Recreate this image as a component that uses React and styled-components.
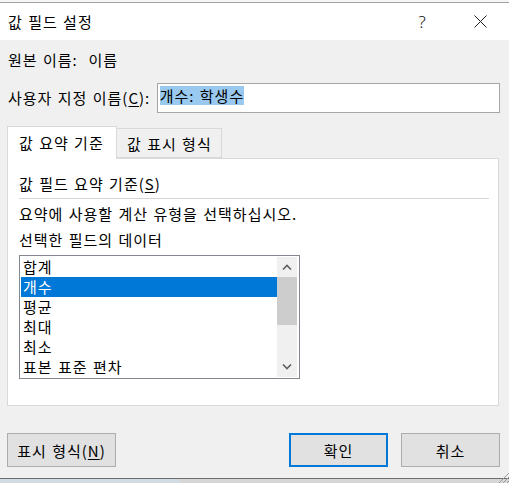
import React from 'react';
import styled, { createGlobalStyle } from 'styled-components';

const GlobalStyle = createGlobalStyle`
    html, body {
        margin: 0;
        padding: 0;
        background: #f0f0f0;
    }
    body {
        font-family: "Noto Sans CJK KR", "Noto Sans", sans-serif;
        font-size: 15px;
        letter-spacing: 1px;
        word-spacing: 1px;
        color: #000;
    }
`;

const Page = styled.div`
    position: relative;
    width: 509px;
    height: 483px;
    display: flex;
    flex-direction: column;
    overflow: hidden;
`;

const TopStrip = styled.div`
    height: 2px;
    background: #f6f6f6;
    border-bottom: 1px solid #a3a3a3;
`;

const TitleBar = styled.div`
    height: 37px;
    background: #fff;
    display: flex;
    align-items: center;
    padding-left: 8px;
`;

const Title = styled.div`
    flex: 1;
    line-height: 20px;
`;

const TitleButton = styled.div`
    width: 58px;
    height: 37px;
    display: flex;
    align-items: center;
    justify-content: center;
    font-family: "Noto Sans", sans-serif;
    font-size: 17px;
    font-weight: 300;
    letter-spacing: 0;
    color: #111;
`;

const Body = styled.div`
    flex: 1;
    display: flex;
    flex-direction: column;
    padding: 0 9px 0 7px;
`;

const TextRow = styled.div`
    display: flex;
    align-items: center;
    height: ${p => p.h || 20}px;
    margin-top: ${p => p.mt || 0}px;
    padding-left: ${p => p.pl || 0}px;
    line-height: 20px;
    white-space: pre;
`;

const Label = styled.div`
    width: 149px;
    white-space: pre;
`;

const NameInput = styled.div`
    box-sizing: border-box;
    width: 344px;
    height: 30px;
    background: #fff;
    border: 1px solid #a6a6a6;
    padding: 2px 2px;
    display: flex;
    align-items: flex-start;
`;

const Selected = styled.span`
    background: #99c9ef;
    line-height: 19px;
    height: 19px;
`;

const U = styled.span`
    text-decoration: underline;
    text-underline-offset: 2px;
`;

const TabBar = styled.div`
    display: flex;
    align-items: flex-end;
    margin-top: 13px;
    height: 32px;
`;

const Tab = styled.div`
    box-sizing: border-box;
    height: ${p => (p.active ? 33 : 30)}px;
    margin-bottom: ${p => (p.active ? -1 : 0)}px;
    position: relative;
    z-index: ${p => (p.active ? 1 : 0)};
    width: ${p => p.w}px;
    background: ${p => (p.active ? '#fff' : '#f0f0f0')};
    border: 1px solid #d9d9d9;
    border-bottom: ${p => (p.active ? 'none' : '1px solid #d9d9d9')};
    border-left: ${p => (p.first ? '1px solid #d9d9d9' : 'none')};
    padding-left: ${p => p.pl}px;
    display: flex;
    align-items: center;
    padding-bottom: ${p => (p.active ? 1 : 0)}px;
    white-space: pre;
`;

const Panel = styled.div`
    box-sizing: border-box;
    width: 492px;
    height: 248px;
    background: #fff;
    border: 1px solid #d9d9d9;
    padding: 15px 9px 0 11px;
    display: flex;
    flex-direction: column;
`;

const Separator = styled.div`
    height: 1px;
    background: #d5d5d5;
    margin-top: 4px;
`;

const ListBox = styled.div`
    box-sizing: border-box;
    margin-top: 5px;
    width: 281px;
    height: 124px;
    border: 1px solid #828790;
    padding: 1px;
    display: flex;
    background: #fff;
`;

const Items = styled.div`
    flex: 1;
    display: flex;
    flex-direction: column;
`;

const Item = styled.div`
    height: 20px;
    line-height: 20px;
    padding-left: 2px;
    background: ${p => (p.selected ? '#0078d7' : 'transparent')};
    color: ${p => (p.selected ? '#fff' : '#000')};
    white-space: pre;
`;

const ScrollBar = styled.div`
    width: 20px;
    background: #f0f0f0;
    display: flex;
    flex-direction: column;
    margin-right: 1px;
`;

const ScrollArrow = styled.div`
    height: 20px;
    display: flex;
    align-items: center;
    justify-content: center;
`;

const Thumb = styled.div`
    height: 48px;
    background: #cdcdcd;
`;

const Track = styled.div`
    flex: 1;
`;

const ButtonRow = styled.div`
    display: flex;
    justify-content: space-between;
    margin-top: 27px;
`;

const ButtonGroup = styled.div`
    display: flex;
    gap: 13px;
`;

const Button = styled.div`
    box-sizing: border-box;
    width: ${p => p.w || 99}px;
    height: 34px;
    background: #e1e1e1;
    border: ${p => (p.primary ? '2px solid #0078d7' : '1px solid #adadad')};
    display: flex;
    align-items: center;
    justify-content: center;
    white-space: pre;
`;

const BottomStrip = styled.div`
    height: 4px;
    border-top: 1px solid #6e6e6e;
    background: linear-gradient(to right, #d3dbe3 0 180px, #d6d6d6 180px);
`;

const Grip = styled.svg`
    position: absolute;
    right: 0;
    bottom: 0;
`;

const Chevron = ({ up }) => (
    <svg width="10" height="6" viewBox="0 0 10 6">
        <polyline
            points={up ? '1,5.5 5,1.5 9,5.5' : '1,0.5 5,4.5 9,0.5'}
            fill="none"
            stroke="#606060"
            strokeWidth="1.6"
        />
    </svg>
);

const items = ['합계', '개수', '평균', '최대', '최소', '표본 표준 편차'];

export default function App() {
    return (
        <Page>
            <GlobalStyle />
            <TopStrip />
            <TitleBar>
                <Title>값 필드 설정</Title>
                <TitleButton>?</TitleButton>
                <TitleButton>
                    <svg width="13" height="13" viewBox="0 0 13 13">
                        <line x1="0.5" y1="0.5" x2="12.5" y2="12.5" stroke="#222" strokeWidth="1" />
                        <line x1="12.5" y1="0.5" x2="0.5" y2="12.5" stroke="#222" strokeWidth="1" />
                    </svg>
                </TitleButton>
            </TitleBar>
            <Body>
                <TextRow mt={10} pl={1}>원본 이름:  이름</TextRow>
                <TextRow mt={13} h={30} pl={1}>
                    <Label>사용자 지정 이름(<U>C</U>):</Label>
                    <NameInput>
                        <Selected>개수: 학생수</Selected>
                    </NameInput>
                </TextRow>
                <TabBar>
                    <Tab active first w={110} pl={11}>값 요약 기준</Tab>
                    <Tab w={105} pl={10}>값 표시 형식</Tab>
                </TabBar>
                <Panel>
                    <TextRow>값 필드 요약 기준(<U>S</U>)</TextRow>
                    <Separator />
                    <TextRow mt={5}>요약에 사용할 계산 유형을 선택하십시오.</TextRow>
                    <TextRow mt={6}>선택한 필드의 데이터</TextRow>
                    <ListBox>
                        <Items>
                            {items.map((it, i) => (
                                <Item key={it} selected={i === 1}>{it}</Item>
                            ))}
                        </Items>
                        <ScrollBar>
                            <ScrollArrow><Chevron up /></ScrollArrow>
                            <Thumb />
                            <Track />
                            <ScrollArrow><Chevron /></ScrollArrow>
                        </ScrollBar>
                    </ListBox>
                </Panel>
                <ButtonRow>
                    <Button w={109}>표시 형식(<U>N</U>)</Button>
                    <ButtonGroup>
                        <Button primary>확인</Button>
                        <Button>취소</Button>
                    </ButtonGroup>
                </ButtonRow>
            </Body>
            <BottomStrip />
            <Grip width="12" height="12" viewBox="0 0 12 12">
                <line x1="12" y1="2" x2="2" y2="12" stroke="#999" strokeWidth="1" />
                <line x1="12" y1="6" x2="6" y2="12" stroke="#999" strokeWidth="1" />
                <line x1="12" y1="10" x2="10" y2="12" stroke="#999" strokeWidth="1" />
            </Grip>
        </Page>
    );
}
